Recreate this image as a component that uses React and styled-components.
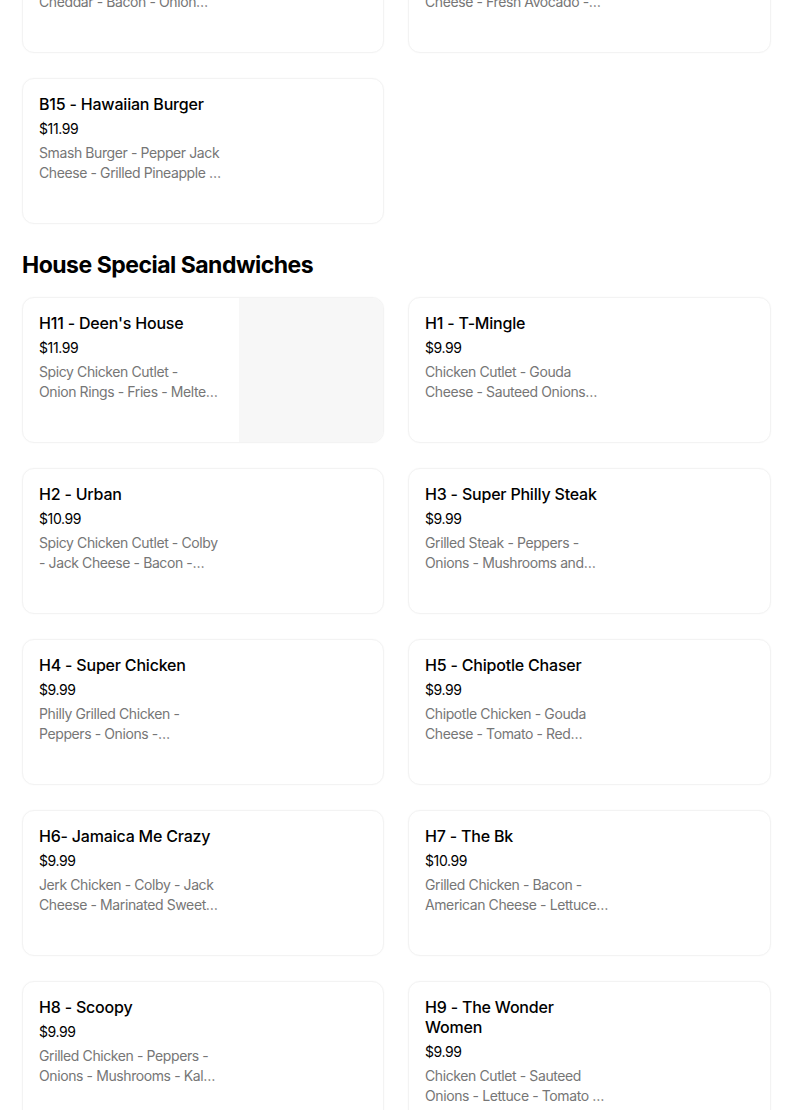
import React from 'react';
import styled, { createGlobalStyle } from 'styled-components';

const GlobalStyle = createGlobalStyle`
  html, body {
    margin: 0;
    padding: 0;
    background: #fff;
    overflow: hidden;
  }
  body {
    font-family: Inter, "Noto Sans", "Liberation Sans", sans-serif;
    color: #000;
  }
`;

const Page = styled.div`
  padding: 0 33px 0 22px;
  margin-top: -93px;
`;

const Grid = styled.div`
  display: grid;
  grid-template-columns: 362px 363px;
  column-gap: 24px;
  row-gap: 25px;
`;

const SectionTitle = styled.h2`
  margin: 25px 0 16px;
  font-size: 23px;
  line-height: 32px;
  font-weight: 700;
  letter-spacing: -0.5px;
`;

const Card = styled.div`
  display: flex;
  height: 146px;
  box-sizing: border-box;
  border: 1px solid #f3f3f3;
  border-radius: 12px;
  overflow: hidden;
  background: #fff;
  box-shadow: 0 0 2px rgba(0, 0, 0, 0.03);
`;

const Info = styled.div`
  width: 216px;
  box-sizing: border-box;
  padding: 15px ${p => (p.$photo ? '21px' : '16px')} 0 16px;
  flex-shrink: 0;
`;

const Name = styled.div`
  font-size: 16px;
  line-height: 20px;
  font-weight: 500;
  letter-spacing: -0.2px;
`;

const Price = styled.div`
  margin-top: 5px;
  font-size: 14px;
  line-height: 20px;
  letter-spacing: -0.4px;
`;

const Desc = styled.div`
  margin-top: 4px;
  font-size: 14px;
  line-height: 20px;
  letter-spacing: -0.4px;
  color: #767676;
  display: -webkit-box;
  -webkit-line-clamp: 2;
  -webkit-box-orient: vertical;
  overflow: hidden;
`;

const Photo = styled.div`
  flex: 1;
  background: #f7f7f7;
`;

const topItems = [
  { name: 'B13 - Bacon Burger', price: '$10.99', desc: 'Smash Burger - Aged Cheddar - Bacon - Onion Rings - BBQ Sauce' },
  { name: 'B14 - Avocado Burger', price: '$11.99', desc: 'Smash Burger - Swiss Cheese - Fresh Avocado - Lettuce - Tomato' },
  { name: 'B15 - Hawaiian Burger', price: '$11.99', desc: 'Smash Burger - Pepper Jack Cheese - Grilled Pineapple - Teriyaki Sauce' },
];

const sandwiches = [
  { name: "H11 - Deen's House", price: '$11.99', desc: 'Spicy Chicken Cutlet - Onion Rings - Fries - Melted Cheese - Special Sauce', photo: true },
  { name: 'H1 - T-Mingle', price: '$9.99', desc: 'Chicken Cutlet - Gouda Cheese - Sauteed Onions Mushrooms - Lettuce' },
  { name: 'H2 - Urban', price: '$10.99', desc: 'Spicy Chicken Cutlet - Colby - Jack Cheese - Bacon - Lettuce - Tomato' },
  { name: 'H3 - Super Philly Steak', price: '$9.99', desc: 'Grilled Steak - Peppers - Onions - Mushrooms and American Cheese' },
  { name: 'H4 - Super Chicken', price: '$9.99', desc: 'Philly Grilled Chicken - Peppers - Onions - Mushrooms - American Cheese' },
  { name: 'H5 - Chipotle Chaser', price: '$9.99', desc: 'Chipotle Chicken - Gouda Cheese - Tomato - Red Onions - Chipotle Mayo' },
  { name: 'H6- Jamaica Me Crazy', price: '$9.99', desc: 'Jerk Chicken - Colby - Jack Cheese - Marinated Sweet Peppers - Jerk Sauce' },
  { name: 'H7 - The Bk', price: '$10.99', desc: 'Grilled Chicken - Bacon - American Cheese - Lettuce - Tomato - Mayo' },
  { name: 'H8 - Scoopy', price: '$9.99', desc: 'Grilled Chicken - Peppers - Onions - Mushrooms - Kale - Garlic Sauce' },
  { name: 'H9 - The Wonder Women', price: '$9.99', desc: 'Chicken Cutlet - Sauteed Onions - Lettuce - Tomato - Honey Mustard' },
];

const MenuCard = ({ item }) => (
  <Card>
    <Info $photo={item.photo}>
      <Name>{item.name}</Name>
      <Price>{item.price}</Price>
      <Desc>{item.desc}</Desc>
    </Info>
    {item.photo && <Photo />}
  </Card>
);

const App = () => (
  <>
    <GlobalStyle />
    <Page>
      <Grid>
        {topItems.map(item => (
          <MenuCard key={item.name} item={item} />
        ))}
      </Grid>
      <SectionTitle>House Special Sandwiches</SectionTitle>
      <Grid>
        {sandwiches.map(item => (
          <MenuCard key={item.name} item={item} />
        ))}
      </Grid>
    </Page>
  </>
);

export default App;
